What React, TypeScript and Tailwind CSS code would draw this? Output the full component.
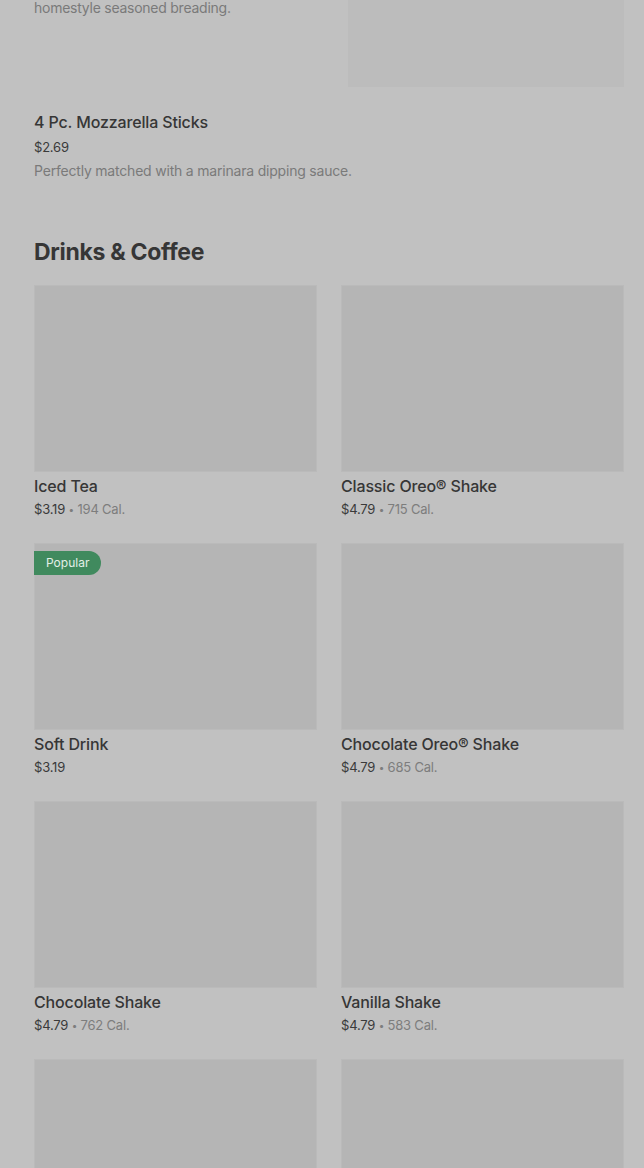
import React from 'react';

type Drink = {
  name: string;
  price: string;
  cal?: string;
  popular?: boolean;
};

const drinks: Drink[] = [
  { name: 'Iced Tea', price: '$3.19', cal: '194 Cal.' },
  { name: 'Classic Oreo® Shake', price: '$4.79', cal: '715 Cal.' },
  { name: 'Soft Drink', price: '$3.19', popular: true },
  { name: 'Chocolate Oreo® Shake', price: '$4.79', cal: '685 Cal.' },
  { name: 'Chocolate Shake', price: '$4.79', cal: '762 Cal.' },
  { name: 'Vanilla Shake', price: '$4.79', cal: '583 Cal.' },
  { name: '', price: '' },
  { name: '', price: '' },
];

function DrinkCard({ drink }: { drink: Drink }) {
  return (
    <div className="flex flex-col">
      <div className="relative h-[187px] w-full bg-[#b5b5b5] ring-1 ring-inset ring-[#bababa]">
        {drink.popular && (
          <span className="absolute left-0 top-2 h-6 px-3 flex items-center rounded-r-full bg-[#408a5e] text-[12px] text-[#e3efe7]">
            Popular
          </span>
        )}
      </div>
      {drink.name && (
        <>
          <div className="mt-[2px] h-6 leading-6 text-[16px] font-medium tracking-[-0.15px] text-[#363636]">{drink.name}</div>
          <div className="mt-[1px] h-5 leading-5 text-[13px] tracking-[-0.2px] text-[#3a3a3a]">
            {drink.price}
            {drink.cal && (
              <span className="text-[#7d7d7d]">
                {' '}<span className="text-[10px] align-[1px]">•</span> {drink.cal}
              </span>
            )}
          </div>
        </>
      )}
    </div>
  );
}

export default function App() {
  return (
    <div className="w-[644px] h-[1168px] overflow-hidden bg-[#c1c1c1] font-['Inter',sans-serif]">
      <div className="pl-[34px] pr-[20px]">
        {/* tail of previous item */}
        <div className="flex justify-between">
          <p className="-mt-[2px] leading-5 text-[14px] tracking-[-0.25px] text-[#7a7a7a]">homestyle seasoned breading.</p>
          <div className="w-[276px] h-[87px] bg-[#bcbcbc]" />
        </div>

        <div className="mt-[23px]">
          <h3 className="h-6 leading-6 text-[16px] font-medium tracking-[-0.15px] text-[#363636]">4 Pc. Mozzarella Sticks</h3>
          <div className="mt-[3px] h-5 leading-5 text-[13px] tracking-[-0.2px] text-[#3a3a3a]">$2.69</div>
          <p className="mt-1 h-5 leading-5 text-[14px] tracking-[-0.2px] text-[#7a7a7a]">Perfectly matched with a marinara dipping sauce.</p>
        </div>

        <h2 className="mt-[57px] h-7 leading-7 text-[23px] font-bold tracking-[-0.3px] text-[#363636]">Drinks &amp; Coffee</h2>

        <div className="mt-[19px] grid grid-cols-2 gap-x-6 gap-y-6">
          {drinks.map((d, i) => (
            <DrinkCard key={i} drink={d} />
          ))}
        </div>
      </div>
    </div>
  );
}
